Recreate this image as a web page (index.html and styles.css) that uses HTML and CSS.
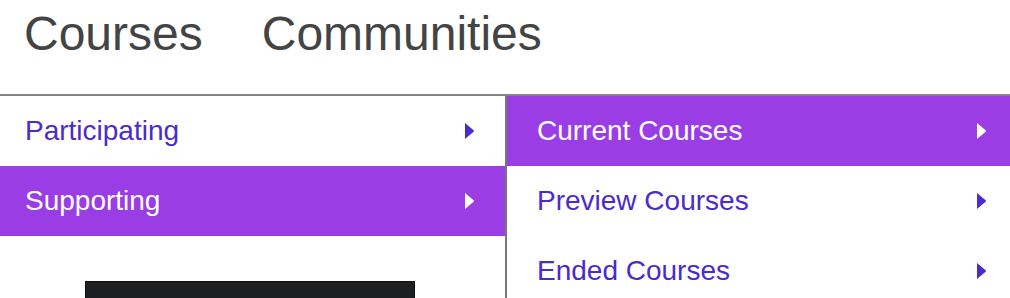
FILE: index.html
```html
<!DOCTYPE html>
<html lang="en">
<head>
<meta charset="utf-8">
<title>Courses menu</title>
<link rel="stylesheet" href="styles.css">
</head>
<body>
<header class="topnav">
  <a class="topnav-link">Courses</a>
  <a class="topnav-link">Communities</a>
</header>
<div class="menus">
  <div class="menu menu-primary">
    <a class="menu-item">
      <span>Participating</span>
      <svg class="caret" viewBox="0 0 9 16" width="9" height="16"><path d="M0 0 L8.6 7.3 Q9.1 8 8.6 8.7 L0 16 Z"/></svg>
    </a>
    <a class="menu-item is-active">
      <span>Supporting</span>
      <svg class="caret" viewBox="0 0 9 16" width="9" height="16"><path d="M0 0 L8.6 7.3 Q9.1 8 8.6 8.7 L0 16 Z"/></svg>
    </a>
    <div class="media-box"></div>
  </div>
  <div class="menu menu-secondary">
    <a class="menu-item is-active">
      <span>Current Courses</span>
      <svg class="caret" viewBox="0 0 9 16" width="9" height="16"><path d="M0 0 L8.6 7.3 Q9.1 8 8.6 8.7 L0 16 Z"/></svg>
    </a>
    <a class="menu-item">
      <span>Preview Courses</span>
      <svg class="caret" viewBox="0 0 9 16" width="9" height="16"><path d="M0 0 L8.6 7.3 Q9.1 8 8.6 8.7 L0 16 Z"/></svg>
    </a>
    <a class="menu-item">
      <span>Ended Courses</span>
      <svg class="caret" viewBox="0 0 9 16" width="9" height="16"><path d="M0 0 L8.6 7.3 Q9.1 8 8.6 8.7 L0 16 Z"/></svg>
    </a>
  </div>
</div>
</body>
</html>
```
FILE: styles.css
```css
html, body {
  margin: 0;
  padding: 0;
  background: #ffffff;
  overflow: hidden;
}

body {
  font-family: "Liberation Sans", Arial, Helvetica, sans-serif;
}

.topnav {
  padding: 6px 0 0 24px;
  height: 88px;
  display: flex;
  gap: 59px;
  border-bottom: 2px solid #858585;
}

.topnav-link {
  font-size: 48px;
  color: #444444;
  line-height: 55px;
}

.menus {
  display: grid;
  grid-template-columns: 505px 1fr;
  min-height: 220px;
}

.menu {
  display: flex;
  flex-direction: column;
}

.menu-secondary {
  border-left: 2px solid #777777;
}

.menu-item {
  height: 70px;
  display: flex;
  align-items: center;
  justify-content: space-between;
  font-size: 28px;
  color: #4b2bcb;
  fill: #4b2bcb;
  flex-shrink: 0;
}

.menu-primary .menu-item {
  padding: 0 31px 0 25px;
}

.menu-secondary .menu-item {
  padding: 0 24px 0 30px;
}

.menu-item.is-active {
  background: #9a3de5;
  color: #ffffff;
  fill: #ffffff;
}

.caret {
  display: block;
}

.media-box {
  margin: 45px 0 0 85px;
  width: 328px;
  height: 60px;
  background: #1e1f21;
  border: 1px solid #0f0f10;
}
```
